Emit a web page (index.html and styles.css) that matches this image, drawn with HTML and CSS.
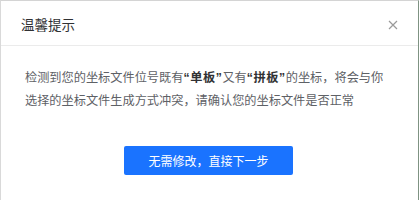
FILE: index.html
```html
<!DOCTYPE html>
<html lang="zh">
<head>
<meta charset="utf-8">
<link rel="stylesheet" href="styles.css">
</head>
<body>
<div class="dialog">
  <div class="header">
    <span class="title">温馨提示</span>
    <span class="close" aria-label="close">
      <svg width="10" height="10" viewBox="0 0 10 10"><path d="M1 1L9 9M9 1L1 9" stroke="#9a9a9a" stroke-width="1.2" fill="none"/></svg>
    </span>
  </div>
  <div class="body">
    <p class="msg">检测到您的坐标文件位号既有<b>“单板”</b>又有<b>“拼板”</b>的坐标，将会与你选择的坐标文件生成方式冲突，请确认您的坐标文件是否正常</p>
    <div class="actions">
      <button class="btn">无需修改，直接下一步</button>
    </div>
  </div>
</div>
</body>
</html>
```
FILE: styles.css
```css
html, body {
  margin: 0;
  padding: 0;
  background: #fff;
}
body {
  font-family: "Noto Sans CJK SC", "Liberation Sans", sans-serif;
}
.dialog {
  width: 419px;
  height: 200px;
  box-sizing: border-box;
  border-top: 1px solid #d4d4d4;
  border-left: 1px solid #d9d9d9;
  border-right: 1px solid #7f9383;
  background: #fff;
  display: flex;
  flex-direction: column;
}
.header {
  height: 44px;
  box-sizing: border-box;
  border-bottom: 1px solid #ebebeb;
  display: flex;
  align-items: center;
  justify-content: space-between;
  padding: 0 20px 0 20px;
  margin-top: 1px;
}
.title {
  font-size: 13.5px;
  color: #303133;
  line-height: 20px;
}
.close {
  display: flex;
  width: 10px;
  height: 10px;
  margin-top: 2px;
}
.body {
  padding: 21px 24px 0 24px;
  display: flex;
  flex-direction: column;
}
.msg {
  margin: 0;
  font-family: "Liberation Sans", "Noto Sans CJK SC", sans-serif;
  font-size: 12.2px;
  line-height: 23px;
  color: #5e6166;
}
.msg b {
  color: #303133;
  font-weight: 700;
  letter-spacing: 0.6px;
}
.actions {
  display: flex;
  justify-content: center;
  margin-top: 33px;
  padding-right: 2px;
}
.btn {
  width: 169px;
  height: 29px;
  border: none;
  border-radius: 2px;
  background: #1a73ff;
  color: #fff;
  font-family: "Noto Sans CJK SC", "Liberation Sans", sans-serif;
  font-size: 12px;
  padding: 0;
}
```
